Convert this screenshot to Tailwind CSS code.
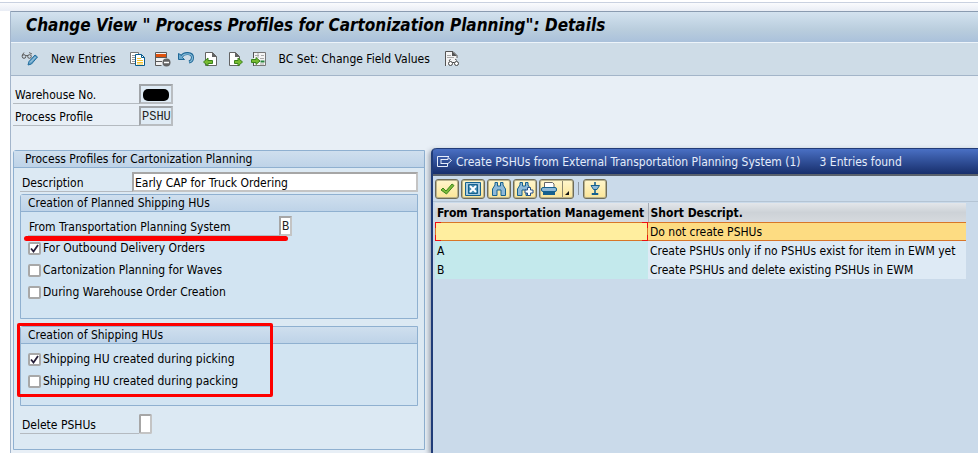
<!DOCTYPE html>
<html lang="en">
<head>
    <meta charset="UTF-8">
    <meta name="viewport" content="width=device-width, initial-scale=1.0">
    <title>Change View "Process Profiles for Cartonization Planning": Details</title>
    <script src="https://cdn.jsdelivr.net/npm/@tailwindcss/browser@4"></script>
</head>
<body class="bg-white min-h-screen flex flex-col overflow-hidden text-black text-[12px] leading-[18px] font-['DejaVu_Sans_Condensed','DejaVu_Sans',sans-serif]">
    <!-- Window edge -->
    <div class="mt-[2px] h-[9px] border-t border-[#c9d1e0] bg-linear-to-b from-[#fafbfd] to-[#e9edf5]"></div>

    <div class="ml-[10px] flex-1 flex flex-col border-l border-[#a3b5cb] bg-[#e8eff6]">
        <header class="h-[32px] flex items-center pl-[15px] border-t border-b border-t-[#8a9bb0] border-b-[#edf4fa] bg-linear-to-b from-[#d3e2ef] via-[#b9cddd] via-60% to-[#aac1db]">
            <h1 class="text-[17px] leading-[20px] pb-[4px] font-bold italic whitespace-pre">Change View " Process Profiles for Cartonization Planning": Details</h1>
        </header>

        <!-- Application toolbar -->
        <nav class="h-[33px] flex items-center pl-[10px] bg-[#cedce7] border-b border-[#a3b5c9] whitespace-nowrap">
            <button type="button" aria-label="Display / Change" class="mr-[13px]">
                <svg width="17" height="16" viewBox="0 0 17 16" fill="none">
                    <path d="M1 4.500L3 1.500M8 1.500L11 3M5 4.500h2" stroke="#666" stroke-width="1"/>
                    <circle cx="3" cy="5.500" r="1.800" stroke="#555"/><circle cx="8.500" cy="5.500" r="1.800" stroke="#555"/>
                    <path d="M7 14l1-3.500L14 4l2.500 2-6 7z" fill="#5d9cc4" stroke="#236e9e"/>
                    <path d="M9 11.500L14.500 6" stroke="#b9d9ea"/>
                </svg>
            </button>
            <button type="button" class="mr-[14px]">New Entries</button>
            <button type="button" aria-label="Copy As" class="mr-[8px]">
                <svg width="16" height="16" viewBox="0 0 16 16" fill="none">
                    <path d="M.5 1.500h8v11h-8z" fill="#fff" stroke="#777"/>
                    <path d="M2 4.500h4M2 6.500h4M2 8.500h4M2 10.500h4" stroke="#999"/>
                    <path d="M5.500 3.500h6l3 3v8h-9z" fill="#fff" stroke="#075a8c"/>
                    <path d="M11.500 3.500v3h3" stroke="#075a8c"/>
                    <path d="M7 7.500h4M7 9.500h6M7 11.500h6M7 13h6" stroke="#f2c230"/>
                </svg>
            </button>
            <button type="button" aria-label="Delete" class="mr-[7px]">
                <svg width="17" height="16" viewBox="0 0 17 16" fill="none">
                    <path d="M12.500 7V1.500h-11v13h6" fill="#f1f1f1" stroke="#5b5b5b"/>
                    <path d="M2 3h10v3H2z" fill="#e0520d"/>
                    <path d="M1 6.500h12M1 10.500h7" stroke="#5b5b5b"/>
                    <circle cx="12.500" cy="11.500" r="4" fill="#636363"/>
                    <path d="M10 11.500h5" stroke="#fff" stroke-width="1.500"/>
                </svg>
            </button>
            <button type="button" aria-label="Undo" class="mr-[9px]">
                <svg width="16" height="16" viewBox="0 0 16 16" fill="none">
                    <path d="M3.500 5.500C6 1 14.500 1.500 14.500 6.500c0 2.500-1.500 4-3.500 4.500" stroke="#1e6796" stroke-width="3"/>
                    <path d="M.5 2.500v6h6l-2-2L3 4z" fill="#69a9ce" stroke="#1e6796"/>
                    <path d="M3.500 6C6 1.500 14 2 14.500 6.500c0 2.500-1.500 4-3 4.500" stroke="#86bbd9" stroke-width="1.200"/>
                </svg>
            </button>
            <button type="button" aria-label="Previous Entry" class="mr-[10px]">
                <svg width="15" height="16" viewBox="0 0 15 16" fill="none">
                    <path d="M2.500 1.500h7l4 4v9h-11z" fill="#fff" stroke="#636363"/>
                    <path d="M9 1l5 5H9z" fill="#636363"/>
                    <path d="M.5 11L5 7v2.500h4.500v3H5V15z" fill="#77bb31" stroke="#3b831c"/>
                </svg>
            </button>
            <button type="button" aria-label="Next Entry" class="mr-[8px]">
                <svg width="15" height="16" viewBox="0 0 15 16" fill="none">
                    <path d="M1.500 1.500h6l4 4v9h-10z" fill="#fff" stroke="#636363"/>
                    <path d="M7 1l5 5H7z" fill="#636363"/>
                    <path d="M14.500 11L10 7v2.500H6.500v3H10V15z" fill="#77bb31" stroke="#3b831c"/>
                </svg>
            </button>
            <button type="button" aria-label="Other Entry" class="mr-[12px]">
                <svg width="16" height="16" viewBox="0 0 16 16" fill="none">
                    <path d="M2.500 7V1.500h12v13h-12V12" fill="#f4f4f4" stroke="#777"/>
                    <path d="M2.500 1v6M2.500 12v3" stroke="#555"/>
                    <path d="M4 4.500h4M10 4.500h3M9 7.500h4M9 13h4M7 2v5" stroke="#aaa"/>
                    <path d="M9.500 10.500h4" stroke="#27843d" stroke-width="2"/>
                    <path d="M9 10L5 6.500v2H.5v3H5v2z" fill="#77bb31" stroke="#3b831c"/>
                </svg>
            </button>
            <button type="button" class="mr-[15px]">BC Set: Change Field Values</button>
            <button type="button" aria-label="Display BC Set">
                <svg width="15" height="16" viewBox="0 0 15 16" fill="none">
                    <path d="M.5 15V.5H8l4 4V7" fill="#fff" stroke="#555"/>
                    <path d="M1 1h7l3 4v9H1z" fill="#f4f4f4"/>
                    <path d="M7 0l5 5H7z" fill="#555"/>
                    <path d="M2 4.500h4M2 6.500h7" stroke="#aaa"/>
                    <path d="M4 10L5.500 8M10 8l2 1.500" stroke="#555"/>
                    <circle cx="5.500" cy="12.500" r="2" fill="#fff" stroke="#444"/><circle cx="11.500" cy="12.500" r="2" fill="#fff" stroke="#444"/>
                    <path d="M7.500 11.500h2" stroke="#444"/>
                </svg>
            </button>
        </nav>

        <!-- Key fields -->
        <section class="pl-[2px] pt-[8px] flex flex-col gap-[2px]">
            <div class="flex h-[20px]">
                <label for="warehouse" class="w-[126px] pl-[2px] pt-[2px] border-b border-[#b4bac0]">Warehouse No.</label>
                <div class="relative w-[34px]">
                    <input id="warehouse" readonly class="block w-full h-full border-2 border-[#a0a4a8] border-r-[#b9bdc1] border-b-[#b9bdc1] bg-[#dfebf5]">
                    <span class="absolute left-[4px] top-[5px] w-[26px] h-[12px] rounded-[5px] bg-black"></span>
                </div>
            </div>
            <div class="flex h-[20px]">
                <label for="profile" class="w-[126px] pl-[2px] pt-[2px] border-b border-[#b4bac0]">Process Profile</label>
                <input id="profile" readonly value="PSHU" class="w-[34px] pl-px pt-px border-2 border-[#a0a4a8] border-r-[#b9bdc1] border-b-[#b9bdc1] bg-[#dfebf5] font-['Liberation_Mono',monospace] text-[#222]">
            </div>
        </section>

        <main class="flex-1 mt-[22px] pl-[2px] grid grid-cols-[412fr_547fr] gap-x-[6px]">
            <!-- Details -->
            <section class="mt-[2px] mb-[3px] border border-[#8fb0d0] rounded-tl-[3px] bg-[#dce9f3] flex flex-col">
                <h2 class="h-[17px] leading-[16px] pl-[11px] border-b border-[#8fb0d0] bg-linear-to-b from-[#cfdfee] to-[#bed3e8]">Process Profiles for Cartonization Planning</h2>
                <div class="px-[6px] pt-[4px]">
                    <div class="flex h-[20px]">
                        <label for="description" class="w-[112px] pl-[2px] pt-[2px] border-b border-[#b4bac0]">Description</label>
                        <input id="description" value="Early CAP for Truck Ordering" class="flex-1 min-w-0 pl-px pt-px bg-white border-2 border-[#a6a6a6] border-r-[#c4c4c4] border-b-[#c4c4c4]">
                    </div>

                    <fieldset class="relative mt-[2px] h-[125px] border border-[#8fb0d0] rounded-tl-[3px] bg-[#d2e4f2]">
                        <h3 class="h-[17px] leading-[16px] pl-[7px] border-b border-[#8fb0d0] bg-linear-to-b from-[#cfdfee] to-[#bed3e8]">Creation of Planned Shipping HUs</h3>
                        <div class="flex h-[20px] mt-[4px] ml-[7px]">
                            <label for="tps" class="w-[251px] pl-px pt-[2px] border-b border-[#b4bac0]">From Transportation Planning System</label>
                            <input id="tps" value="B" class="w-[13px] pl-px pt-px bg-white border-2 border-[#a6a6a6] border-r-[#c4c4c4] border-b-[#c4c4c4] font-['Liberation_Mono',monospace] text-[#222]">
                        </div>
                        <span class="absolute left-[3px] top-[41px] w-[264px] h-[5px] rounded-full bg-[#fe0000]"></span>
                        <div class="ml-[7px] mt-px">
                            <label class="flex items-center gap-[2px] h-[22px]">
                                <input type="checkbox" checked class="appearance-none size-[13px] shrink-0 border-2 border-[#a8a8a8] rounded-[2px] bg-white checked:bg-[url('data:image/svg+xml,%3Csvg%20xmlns=%22http://www.w3.org/2000/svg%22%20viewBox=%220%200%209%209%22%3E%3Cpath%20d=%22M1%204.500L3.500%207.500L8%201%22%20fill=%22none%22%20stroke=%22%23251d38%22%20stroke-width=%221.800%22/%3E%3C/svg%3E')]">
                                For Outbound Delivery Orders
                            </label>
                            <label class="flex items-center gap-[2px] h-[22px]">
                                <input type="checkbox" class="appearance-none size-[13px] shrink-0 border-2 border-[#a8a8a8] rounded-[2px] bg-white">
                                Cartonization Planning for Waves
                            </label>
                            <label class="flex items-center gap-[2px] h-[22px]">
                                <input type="checkbox" class="appearance-none size-[13px] shrink-0 border-2 border-[#a8a8a8] rounded-[2px] bg-white">
                                During Warehouse Order Creation
                            </label>
                        </div>
                    </fieldset>

                    <fieldset class="relative mt-[7px] h-[80px] border border-[#8fb0d0] rounded-tl-[3px] bg-[#d2e4f2]">
                        <h3 class="h-[17px] leading-[16px] pl-[7px] border-b border-[#8fb0d0] bg-linear-to-b from-[#cfdfee] to-[#bed3e8]">Creation of Shipping HUs</h3>
                        <div class="ml-[7px] mt-[4px]">
                            <label class="flex items-center gap-[2px] h-[22px]">
                                <input type="checkbox" checked class="appearance-none size-[13px] shrink-0 border-2 border-[#a8a8a8] rounded-[2px] bg-white checked:bg-[url('data:image/svg+xml,%3Csvg%20xmlns=%22http://www.w3.org/2000/svg%22%20viewBox=%220%200%209%209%22%3E%3Cpath%20d=%22M1%204.500L3.500%207.500L8%201%22%20fill=%22none%22%20stroke=%22%23251d38%22%20stroke-width=%221.800%22/%3E%3C/svg%3E')]">
                                Shipping HU created during picking
                            </label>
                            <label class="flex items-center gap-[2px] h-[22px]">
                                <input type="checkbox" class="appearance-none size-[13px] shrink-0 border-2 border-[#a8a8a8] rounded-[2px] bg-white">
                                Shipping HU created during packing
                            </label>
                        </div>
                        <span class="absolute -left-[4px] -top-[4px] w-[256px] h-[74px] border-3 border-[#fe0000] rounded-[2px]"></span>
                    </fieldset>

                    <div class="flex h-[20px] mt-[8px]">
                        <label for="delete" class="w-[119px] pl-[2px] pt-[2px] border-b border-[#b4bac0]">Delete PSHUs</label>
                        <input id="delete" class="w-[13px] bg-white border-2 border-[#a6a6a6] border-r-[#c4c4c4] border-b-[#c4c4c4] rounded-[2px]">
                    </div>
                </div>
            </section>

            <!-- Value list -->
            <section class="flex flex-col border-l-2 border-[#203c78] rounded-tl-[5px] bg-[#cadaea] shadow-[-2px_2px_5px_rgba(50,60,80,0.45)]">
                <div class="h-[28px] flex items-center pl-[4px] gap-[3px] rounded-tl-[4px] border-t border-b-2 border-t-[#223c78] border-b-[#59616c] bg-linear-to-b from-[#4a70c4] to-[#182f6c] text-[#e4ecfb] whitespace-nowrap">
                    <svg width="16" height="13" viewBox="0 0 16 13" fill="none" stroke="#e4ecfb">
                        <path d="M12 1.500H.5v10h10V9M4 4.500h7v-2l3.500 3L11 8.500H4M4 4v5"/>
                    </svg>
                    <h2>Create PSHUs from External Transportation Planning System (1)</h2>
                    <span class="ml-[16px]">3 Entries found</span>
                </div>
                <div class="flex items-center gap-[2px] pl-[2px] h-[26px] border-b border-[#b4c4d4]">
                    <button type="button" aria-label="Copy" class="w-[24px] h-[20px] flex items-center justify-center border border-[#6f6c58] rounded-[3px] inset-ring inset-ring-[#b9b28c] bg-linear-to-b from-[#fff6cd] to-[#fbe597]">
                        <svg width="16" height="14" viewBox="0 0 16 14"><path d="M2 8l2-2 3 3 6-7 2 1.500L7.500 12z" fill="#7dbb3b" stroke="#3d861e"/></svg>
                    </button>
                    <button type="button" aria-label="Cancel" class="w-[24px] h-[20px] flex items-center justify-center border border-[#6f6c58] rounded-[3px] inset-ring inset-ring-[#b9b28c] bg-linear-to-b from-[#fff6cd] to-[#fbe597]">
                        <svg width="16" height="14" viewBox="0 0 16 14"><path d="M.5.5h15v13H.5z" fill="#a6cadf" stroke="#16618e"/><path d="M3.500 2.500h9v9h-9z" fill="#458aaf" stroke="#16618e"/><path d="M5 4l6 6M11 4l-6 6" stroke="#fff" stroke-width="2"/></svg>
                    </button>
                    <button type="button" aria-label="Find" class="w-[24px] h-[20px] flex items-center justify-center border border-[#6f6c58] rounded-[3px] inset-ring inset-ring-[#b9b28c] bg-linear-to-b from-[#fff6cd] to-[#fbe597]">
                        <svg width="16" height="16" viewBox="0 0 16 16"><path d="M4 1.500h2.500V5h3V1.500H12V4l2.500 4v6.500H10V9H6v5.500H1.500V8L4 4z" fill="#8eb9d8" stroke="#16618e"/></svg>
                    </button>
                    <button type="button" aria-label="Find Next" class="w-[24px] h-[20px] flex items-center justify-center border border-[#6f6c58] rounded-[3px] inset-ring inset-ring-[#b9b28c] bg-linear-to-b from-[#fff6cd] to-[#fbe597]">
                        <svg width="18" height="16" viewBox="0 0 18 16"><path d="M4 1.500h2.500V5h3V1.500H12V4l2.500 4v6.500H10V9H6v5.500H1.500V8L4 4z" fill="#8eb9d8" stroke="#16618e"/><path d="M11.500 6.500h3v2.500h2.500v3h-2.500v2.500h-3V12H9V9h2.500z" fill="#fff" stroke="#244f86"/></svg>
                    </button>
                    <button type="button" aria-label="Print" class="w-[35px] h-[20px] pl-px flex items-center border border-[#6f6c58] rounded-[3px] inset-ring inset-ring-[#b9b28c] bg-linear-to-b from-[#fff6cd] to-[#fbe597]">
                        <svg width="31" height="16" viewBox="0 0 31 16"><path d="M3.500 6V1.500h8L13 3v4" fill="#fff" stroke="#666"/><rect x=".5" y="6.500" width="15" height="4" rx="1.500" fill="#8eb9d8" stroke="#16618e"/><path d="M2 12.500h12" stroke="#16618e" stroke-width="3"/><path d="M21.500 0v16" stroke="#8d8870"/><path d="M28 10v4h-4z" fill="#111"/></svg>
                    </button>
                    <span class="mx-[2px] w-px h-[13px] bg-[#8d97a2]"></span>
                    <button type="button" aria-label="Personal Value List" class="w-[24px] h-[20px] flex items-center justify-center border border-[#6f6c58] rounded-[3px] inset-ring inset-ring-[#b9b28c] bg-linear-to-b from-[#fff6cd] to-[#fbe597]">
                        <svg width="14" height="15" viewBox="0 0 14 15"><path d="M7 1v4M7 8v5" stroke="#16618e" stroke-width="1.600"/><path d="M3 4.500h8.500L9 8.500H5.500zM4 12.500h6v1H4z" fill="#8eb9d8" stroke="#16618e"/></svg>
                    </button>
                </div>
                <table class="mt-px mr-[12px] ml-[2px] table-fixed border-collapse text-left whitespace-nowrap">
                    <thead>
                        <tr class="h-[19px] bg-linear-to-b from-[#e3e6ea] via-[#cdd2d7] to-[#d6dade]">
                            <th class="w-[213px] p-0 pl-[2px] border-r border-[#a4abb5] font-bold">From Transportation Management</th>
                            <th class="p-0 pl-[2px] font-bold">Short Descript.</th>
                        </tr>
                    </thead>
                    <tbody>
                        <tr class="h-[19px]">
                            <td class="relative p-0 bg-[#ffee9f] outline -outline-offset-1 outline-[#d87628]">
                                <span class="absolute left-0 top-0 w-[6px] h-[6px] border-t border-l border-[#ee1010]"></span>
                                <span class="absolute right-0 top-0 w-[6px] h-[6px] border-t border-r border-[#ee1010]"></span>
                                <span class="absolute left-0 bottom-0 w-[6px] h-[6px] border-b border-l border-[#ee1010]"></span>
                                <span class="absolute right-0 bottom-0 w-[6px] h-[6px] border-b border-r border-[#ee1010]"></span>
                            </td>
                            <td class="p-0 pl-[2px] bg-[#fddc82] inset-shadow-[0_1px_#d87628,0_-1px_#d87628]">Do not create PSHUs</td>
                        </tr>
                        <tr class="h-[19px]">
                            <td class="p-0 pl-[2px] bg-[#c3e9ec]">A</td>
                            <td class="p-0 pl-[2px] bg-[#deeaf5]">Create PSHUs only if no PSHUs exist for item in EWM yet</td>
                        </tr>
                        <tr class="h-[19px]">
                            <td class="p-0 pl-[2px] bg-[#c3e9ec]">B</td>
                            <td class="p-0 pl-[2px] bg-[#deeaf5]">Create PSHUs and delete existing PSHUs in EWM</td>
                        </tr>
                    </tbody>
                </table>
            </section>
        </main>
    </div>
</body>
</html>
